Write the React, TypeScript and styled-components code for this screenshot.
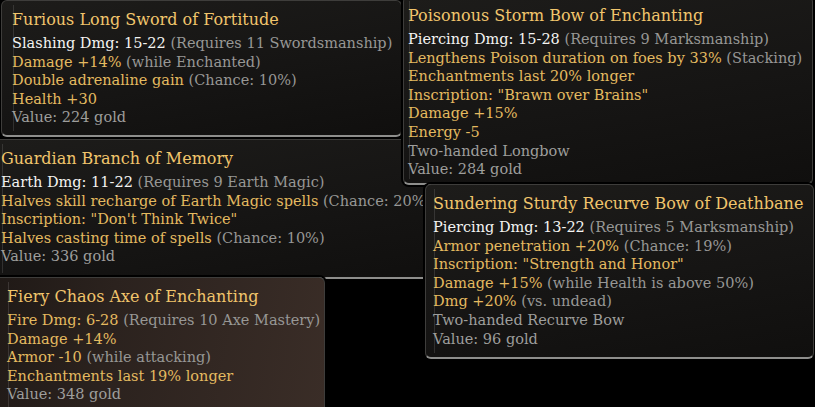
import styled, { createGlobalStyle } from "styled-components";

type Tone = "stat" | "mod" | "note" | "base";
type Seg = [Tone, string];

interface Item {
  title: string;
  rows: Seg[][];
  left: number;
  top: number;
  width: number;
  height: number;
  pad: number;
  warm?: boolean;
}

const GlobalStyle = createGlobalStyle`
  html, body {
    margin: 0;
    padding: 0;
    background: #000;
  }
`;

const Canvas = styled.div`
  position: relative;
  width: 815px;
  height: 407px;
  overflow: hidden;
  background: #000;
  font-family: "DejaVu Serif", "Liberation Serif", serif;
`;

// each tooltip is a floating window on the canvas
const Panel = styled.div<{ $warm?: boolean; $pad: number }>`
  position: absolute;
  box-sizing: border-box;
  padding: 8px 0 0 ${(p) => p.$pad}px;
  border: 1px solid #3e3d3b;
  border-bottom: 2px solid #8e8e8c;
  border-radius: 6px;
  background: ${(p) =>
    p.$warm
      ? "linear-gradient(100deg, #1f1916 0%, #2b221e 35%, #3a2d27 100%)"
      : "linear-gradient(170deg, #1d1c1a 0%, #161514 55%, #100f0e 100%)"};
  box-shadow: 0 0 0 2px #000;
  overflow: hidden;
  white-space: nowrap;

  &::before {
    content: "";
    position: absolute;
    left: ${(p) => p.$pad + 1}px;
    top: 4px;
    bottom: 4px;
    width: 1px;
    background: rgba(255, 255, 255, 0.12);
  }
`;

const Title = styled.div`
  position: relative;
  font-size: 16px;
  line-height: 22px;
  margin-bottom: 3px;
  color: #f1c56c;
`;

const Row = styled.div`
  position: relative;
  font-size: 14.5px;
  line-height: 18.6px;
`;

const toneColor: Record<Tone, string> = {
  stat: "#f4f4f2",
  mod: "#e4ba60",
  note: "#979795",
  base: "#9e9e9c",
};

const Span = styled.span<{ $tone: Tone }>`
  color: ${(p) => toneColor[p.$tone]};
`;

const items: Item[] = [
  {
    title: "Guardian Branch of Memory",
    left: -10,
    top: 139,
    width: 460,
    height: 140,
    pad: 10,
    rows: [
      [["stat", "Earth Dmg: 11-22"], ["note", " (Requires 9 Earth Magic)"]],
      [["mod", "Halves skill recharge of Earth Magic spells"], ["note", " (Chance: 20%)"]],
      [["mod", "Inscription: \"Don't Think Twice\""]],
      [["mod", "Halves casting time of spells"], ["note", " (Chance: 10%)"]],
      [["base", "Value: 336 gold"]],
    ],
  },
  {
    title: "Furious Long Sword of Fortitude",
    left: 1,
    top: 0,
    width: 401,
    height: 137,
    pad: 10,
    rows: [
      [["stat", "Slashing Dmg: 15-22"], ["note", " (Requires 11 Swordsmanship)"]],
      [["mod", "Damage +14%"], ["note", " (while Enchanted)"]],
      [["mod", "Double adrenaline gain"], ["note", " (Chance: 10%)"]],
      [["mod", "Health +30"]],
      [["base", "Value: 224 gold"]],
    ],
  },
  {
    title: "Poisonous Storm Bow of Enchanting",
    left: 403,
    top: -4,
    width: 410,
    height: 189,
    pad: 4,
    rows: [
      [["stat", "Piercing Dmg: 15-28"], ["note", " (Requires 9 Marksmanship)"]],
      [["mod", "Lengthens Poison duration on foes by 33%"], ["note", " (Stacking)"]],
      [["mod", "Enchantments last 20% longer"]],
      [["mod", "Inscription: \"Brawn over Brains\""]],
      [["mod", "Damage +15%"]],
      [["mod", "Energy -5"]],
      [["base", "Two-handed Longbow"]],
      [["base", "Value: 284 gold"]],
    ],
  },
  {
    title: "Sundering Sturdy Recurve Bow of Deathbane",
    left: 425,
    top: 184,
    width: 389,
    height: 175,
    pad: 7,
    rows: [
      [["stat", "Piercing Dmg: 13-22"], ["note", " (Requires 5 Marksmanship)"]],
      [["mod", "Armor penetration +20%"], ["note", " (Chance: 19%)"]],
      [["mod", "Inscription: \"Strength and Honor\""]],
      [["mod", "Damage +15%"], ["note", " (while Health is above 50%)"]],
      [["mod", "Dmg +20%"], ["note", " (vs. undead)"]],
      [["base", "Two-handed Recurve Bow"]],
      [["base", "Value: 96 gold"]],
    ],
  },
  {
    title: "Fiery Chaos Axe of Enchanting",
    left: -10,
    top: 277,
    width: 335,
    height: 140,
    pad: 16,
    warm: true,
    rows: [
      [["mod", "Fire Dmg: 6-28"], ["note", " (Requires 10 Axe Mastery)"]],
      [["mod", "Damage +14%"]],
      [["mod", "Armor -10"], ["note", " (while attacking)"]],
      [["mod", "Enchantments last 19% longer"]],
      [["base", "Value: 348 gold"]],
    ],
  },
];

function Tooltip({ item }: { item: Item }) {
  return (
    <Panel
      $warm={item.warm}
      $pad={item.pad}
      style={{ left: item.left, top: item.top, width: item.width, height: item.height }}
    >
      <Title>{item.title}</Title>
      {item.rows.map((row, i) => (
        <Row key={i}>
          {row.map(([tone, text], j) => (
            <Span key={j} $tone={tone}>
              {text}
            </Span>
          ))}
        </Row>
      ))}
    </Panel>
  );
}

export default function App() {
  return (
    <>
      <GlobalStyle />
      <Canvas>
        {items.map((item) => (
          <Tooltip key={item.title} item={item} />
        ))}
      </Canvas>
    </>
  );
}
